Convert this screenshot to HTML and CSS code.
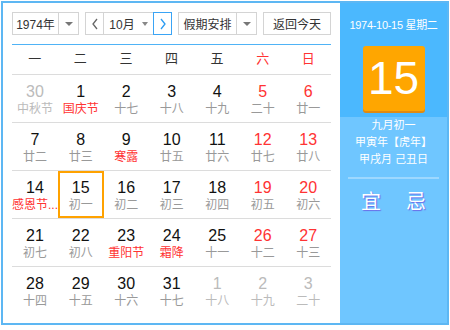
FILE: index.html
```html
<!DOCTYPE html>
<html lang="zh">
<head>
<meta charset="utf-8">
<link rel="stylesheet" href="styles.css">
</head>
<body>
<div class="cal">
  <div class="main">
    <div class="toolbar">
      <div class="sel sel-year"><span class="sel-text">1974年</span><span class="sel-arrow"><i class="tri"></i></span></div>
      <div class="month-group">
        <span class="nav prev"><svg width="8" height="12" viewBox="0 0 8 12"><path d="M6 1 L2 6 L6 11" fill="none" stroke="#666" stroke-width="1.3"/></svg></span>
        <span class="month"><span>10月</span><i class="tri"></i></span>
        <span class="nav next"><svg width="8" height="12" viewBox="0 0 8 12"><path d="M2 1 L6 6 L2 11" fill="none" stroke="#2b9cf2" stroke-width="1.3"/></svg></span>
      </div>
      <div class="sel sel-holiday"><span class="sel-text">假期安排</span><span class="sel-arrow"><i class="tri"></i></span></div>
      <div class="btn">返回今天</div>
    </div>
    <div class="weekdays">
      <span>一</span><span>二</span><span>三</span><span>四</span><span>五</span><span class="we">六</span><span class="we">日</span>
    </div>
    <div class="grid">
      <div class="cell other"><b>30</b><small>中秋节</small></div>
      <div class="cell"><b>1</b><small class="fest">国庆节</small></div>
      <div class="cell"><b>2</b><small>十七</small></div>
      <div class="cell"><b>3</b><small>十八</small></div>
      <div class="cell"><b>4</b><small>十九</small></div>
      <div class="cell we"><b>5</b><small>二十</small></div>
      <div class="cell we"><b>6</b><small>廿一</small></div>

      <div class="cell"><b>7</b><small>廿二</small></div>
      <div class="cell"><b>8</b><small>廿三</small></div>
      <div class="cell"><b>9</b><small class="fest">寒露</small></div>
      <div class="cell"><b>10</b><small>廿五</small></div>
      <div class="cell"><b>11</b><small>廿六</small></div>
      <div class="cell we"><b>12</b><small>廿七</small></div>
      <div class="cell we"><b>13</b><small>廿八</small></div>

      <div class="cell"><b>14</b><small class="fest">感恩节...</small></div>
      <div class="cell sel-day"><b>15</b><small>初一</small></div>
      <div class="cell"><b>16</b><small>初二</small></div>
      <div class="cell"><b>17</b><small>初三</small></div>
      <div class="cell"><b>18</b><small>初四</small></div>
      <div class="cell we"><b>19</b><small>初五</small></div>
      <div class="cell we"><b>20</b><small>初六</small></div>

      <div class="cell"><b>21</b><small>初七</small></div>
      <div class="cell"><b>22</b><small>初八</small></div>
      <div class="cell"><b>23</b><small class="fest">重阳节</small></div>
      <div class="cell"><b>24</b><small class="fest">霜降</small></div>
      <div class="cell"><b>25</b><small>十一</small></div>
      <div class="cell we"><b>26</b><small>十二</small></div>
      <div class="cell we"><b>27</b><small>十三</small></div>

      <div class="cell last"><b>28</b><small>十四</small></div>
      <div class="cell last"><b>29</b><small>十五</small></div>
      <div class="cell last"><b>30</b><small>十六</small></div>
      <div class="cell last"><b>31</b><small>十七</small></div>
      <div class="cell last other"><b>1</b><small>十八</small></div>
      <div class="cell last other"><b>2</b><small>十九</small></div>
      <div class="cell last other"><b>3</b><small>二十</small></div>
    </div>
  </div>
  <div class="side">
    <div class="side-top">
      <div class="side-date">1974-10-15 星期二</div>
      <div class="big-day">15</div>
    </div>
    <div class="side-bottom">
      <div class="lunar">九月初一</div>
      <div class="lunar">甲寅年【虎年】</div>
      <div class="lunar">甲戌月 己丑日</div>
      <div class="divider"></div>
      <div class="yiji"><span>宜</span><span>忌</span></div>
    </div>
  </div>
</div>
</body>
</html>
```

FILE: styles.css
```css
* { box-sizing: border-box; }
html, body { margin: 0; padding: 0; background: #fff; }
body { font-family: "Liberation Sans", "Noto Sans CJK SC", sans-serif; }

.cal {
  margin: 1px 0 0 1px;
  width: 448px;
  height: 324px;
  border: 2px solid #5db7f3;
  display: flex;
}

.main {
  width: 337px;
  padding: 9px 9px 0 9px;
}

.toolbar {
  display: flex;
  justify-content: space-between;
  height: 23px;
  margin-bottom: 9px;
}

.sel, .month-group, .btn {
  border: 1px solid #d4d4d4;
  background: #fff;
  height: 23px;
  display: flex;
  align-items: center;
  font-size: 12px;
  color: #333;
}
.sel-year { width: 67px; }
.sel-holiday { width: 79px; }
.sel-text { flex: 1; text-align: center; }
.sel-arrow {
  width: 20px;
  height: 100%;
  border-left: 1px solid #d4d4d4;
  display: flex;
  align-items: center;
  justify-content: center;
}
.tri {
  display: inline-block;
  width: 0; height: 0;
  border-left: 4px solid transparent;
  border-right: 4px solid transparent;
  border-top: 4px solid #777;
}
.month-group { width: 87px; border: none; }
.nav {
  width: 19px;
  height: 23px;
  border: 1px solid #d4d4d4;
  display: flex;
  align-items: center;
  justify-content: center;
}
.nav.next { border-color: #3aa4f5; }
.month {
  flex: 1;
  height: 23px;
  border-top: 1px solid #d4d4d4;
  border-bottom: 1px solid #d4d4d4;
  display: flex;
  align-items: center;
  justify-content: center;
  gap: 6px;
}
.month .tri { border-width: 4px 3px 0 3px; border-top-color: #888; margin-left: 1px; }
.btn { width: 68px; justify-content: center; }

.weekdays {
  display: grid;
  grid-template-columns: repeat(7, 1fr);
  border-top: 1px solid #4fb3f6;
  border-bottom: 1px solid #dcdcdc;
  height: 31px;
  align-items: center;
  font-size: 13px;
  line-height: 16px;
  padding-bottom: 2px;
  color: #333;
  text-align: center;
}
.weekdays .we { color: #f33; }

.grid {
  display: grid;
  grid-template-columns: repeat(7, 1fr);
}
.cell {
  height: 48px;
  border-bottom: 1px solid #dcdcdc;
  text-align: center;
  padding-top: 8px;
  display: flex;
  flex-direction: column;
  align-items: center;
}
.cell.last { border-bottom: none; }
.cell b {
  font-weight: normal;
  font-size: 16px;
  line-height: 18px;
  color: #111;
}
.cell small {
  font-size: 12px;
  line-height: 16px;
  color: #999;
  white-space: nowrap;
}
.cell.we b { color: #f33; }
.cell small.fest { color: #f33; }
.cell.other b, .cell.other small { color: #bbb; }
.cell.sel-day { box-shadow: inset 0 0 0 2px #ffa200; }

.side {
  width: 107px;
  display: flex;
  flex-direction: column;
  background: #6fc6ff;
}
.side-top {
  background: #4bb8fe;
  height: 114px;
  display: flex;
  flex-direction: column;
  align-items: center;
  padding-top: 15px;
}
.side-date {
  color: #fff;
  font-size: 11px;
  letter-spacing: -0.3px;
  line-height: 14px;
}
.big-day {
  margin-top: 14px;
  width: 62px;
  height: 65px;
  background: #ffa600;
  border-radius: 3px;
  box-shadow: 0 2px 0 #e08a10;
  color: #fff;
  font-size: 46px;
  line-height: 65px;
  text-align: center;
}
.side-bottom {
  display: flex;
  flex-direction: column;
  align-items: center;
  padding-top: 0;
}
.lunar {
  color: #fff;
  font-size: 11px;
  line-height: 17px;
}
.divider {
  margin-top: 9px;
  width: 91px;
  height: 2px;
  background: #9dd8ff;
}
.yiji {
  display: flex;
  gap: 25px;
  margin-top: 12px;
  font-size: 20px;
  line-height: 22px;
  color: #fff;
  text-shadow: 1px 1px 1px #6a6ae8;
}
```
